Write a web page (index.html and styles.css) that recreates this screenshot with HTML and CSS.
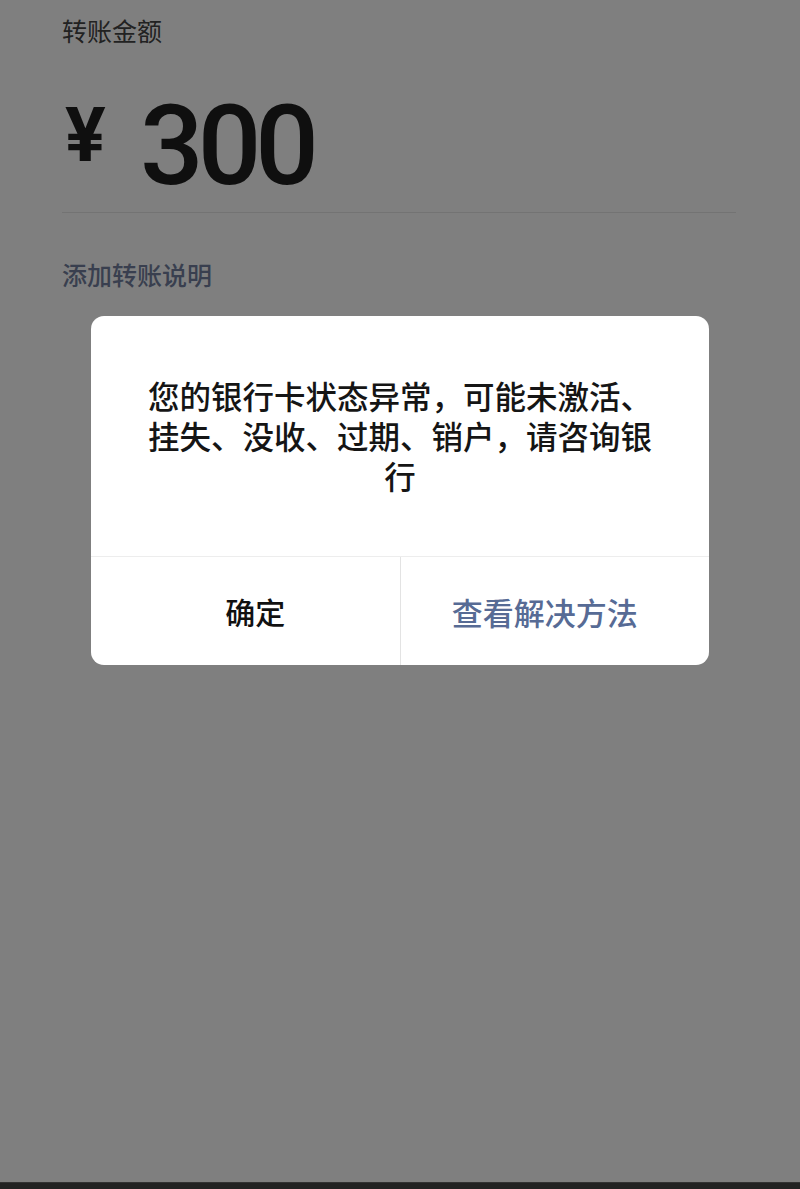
FILE: index.html
```html
<!DOCTYPE html>
<html lang="zh-CN">
<head>
<meta charset="utf-8">
<title>转账</title>
<link rel="stylesheet" href="styles.css">
</head>
<body>
<main class="page">
  <div class="label">转账金额</div>
  <div class="amount">
    <span class="currency">¥</span>
    <span class="value">300</span>
  </div>
  <div class="divider"></div>
  <a class="note-link">添加转账说明</a>
</main>
<div class="mask">
  <div class="dialog">
    <div class="dialog-body">您的银行卡状态异常，可能未激活、挂失、没收、过期、销户，请咨询银行</div>
    <div class="dialog-actions">
      <button class="btn btn-ok">确定</button>
      <button class="btn btn-link">查看解决方法</button>
    </div>
  </div>
  <div class="home-bar"></div>
</div>
</body>
</html>
```
FILE: styles.css
```css
html, body {
  margin: 0;
  padding: 0;
}
body {
  width: 800px;
  height: 1189px;
  background: #ffffff;
  font-family: "Noto Sans CJK SC", "Noto Sans", sans-serif;
  overflow: hidden;
  position: relative;
}
.page {
  padding: 15px 64px 0 62px;
}
.label {
  font-size: 25px;
  line-height: 30px;
  color: #444444;
}
.amount {
  display: flex;
  align-items: flex-start;
  margin-top: 45px;
  height: 112px;
  color: #1e1e1e;
  font-family: Roboto, "DejaVu Sans", sans-serif;
}
.currency {
  font-size: 76px;
  line-height: 1;
  font-weight: 700;
  margin-top: 7px;
  margin-left: 3px;
  width: 75px;
}
.value {
  font-size: 112px;
  line-height: 1;
  font-weight: 500;
  letter-spacing: -6px;
}
.divider {
  margin-top: 10px;
  height: 1px;
  background: #e6e6e6;
}
.note-link {
  display: block;
  margin-top: 46px;
  font-size: 25px;
  line-height: 30px;
  font-weight: 500;
  color: #727e9e;
}
.mask {
  position: absolute;
  inset: 0;
  background: rgba(0, 0, 0, 0.5);
  display: flex;
  justify-content: center;
  align-items: flex-start;
  padding-top: 316px;
}
.dialog {
  width: 618px;
  background: #ffffff;
  border-radius: 13px;
  overflow: hidden;
}
.dialog-body {
  padding: 59px 46px 61px;
  font-size: 31.5px;
  line-height: 40px;
  font-weight: 500;
  text-align: center;
  color: #151515;
}
.dialog-actions {
  display: flex;
  height: 108px;
  border-top: 1px solid #ededed;
}
.btn {
  flex: 1;
  border: 0;
  background: transparent;
  font-family: "Noto Sans CJK SC", "Noto Sans", sans-serif;
  font-size: 30px;
  font-weight: 500;
  padding: 0;
}
.btn-ok {
  color: #111111;
  padding-left: 20px;
  border-right: 1px solid #e3e3e3;
}
.btn-link {
  color: #576b95;
  font-size: 31px;
  padding-right: 20px;
}
.home-bar {
  position: absolute;
  left: 0;
  right: 0;
  bottom: 0;
  height: 6px;
  background: #222222;
  border-top: 1px solid #333333;
}
```
